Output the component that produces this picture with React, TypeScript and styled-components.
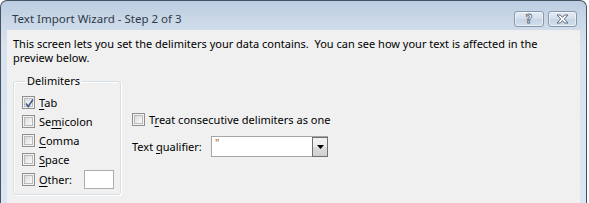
import React from 'react'
import styled, { createGlobalStyle } from 'styled-components'

const GlobalStyle = createGlobalStyle`
    html, body {
        margin: 0;
        padding: 0;
        background: #ffffff;
        overflow: hidden;
    }
    body {
        font-family: "Noto Sans", "DejaVu Sans", sans-serif;
        font-size: 11px;
        color: #000000;
    }
`

const UI_FONT = `"Noto Sans", "DejaVu Sans", sans-serif`

const Window = styled.div`
    width: 587px;
    height: 203px;
    overflow: hidden;
    box-sizing: border-box;
    border: 1px solid #47525f;
    border-bottom: none;
    border-radius: 7px 7px 0 0;
    background: linear-gradient(to bottom, #bccde1 0px, #ccd9e8 22px, #d8e3f0 45px, #dbe6f3 100%);
    padding: 0 6px;
    display: flex;
    flex-direction: column;
`

const TitleBar = styled.div`
    height: 29px;
    flex-shrink: 0;
    display: flex;
    align-items: flex-start;
`

const Title = styled.div`
    flex: 1;
    margin: 10px 0 0 5px;
    line-height: 16px;
    font-family: ${UI_FONT};
    font-size: 11.5px;
    color: #2e3a48;
`

const TitleButtons = styled.div`
    display: flex;
    gap: 4px;
    margin: 10px 3px 0 0;
`

const CaptionButton = styled.div<{ $w: number }>`
    width: ${p => p.$w}px;
    height: 16px;
    box-sizing: border-box;
    border: 1px solid #8696ab;
    border-radius: 3px;
    background: linear-gradient(to bottom, #e4ebf4 0%, #d3deeb 50%, #c6d4e5 51%, #d2deec 100%);
    box-shadow: inset 0 0 0 1px rgba(255, 255, 255, 0.55);
    display: flex;
    align-items: center;
    justify-content: center;
`

const HelpGlyph = styled.span`
    font-family: "DejaVu Sans", sans-serif;
    font-weight: bold;
    font-size: 12px;
    line-height: 12px;
    color: #ffffff;
    -webkit-text-stroke: 0.8px #5d6b7d;
`

const Content = styled.div`
    flex: 1;
    background: #f0f0f0;
    padding: 7px 6px 8px;
`

const Intro = styled.p`
    margin: 0;
    font-family: ${UI_FONT};
    font-size: 11px;
    line-height: 14px;
    white-space: nowrap;
`

const Body = styled.div`
    display: flex;
    gap: 11px;
    margin-top: 9px;
`

const GroupBox = styled.fieldset`
    margin: 0;
    width: 108px;
    height: 121px;
    box-sizing: border-box;
    border: 1px solid #d5dfe5;
    border-radius: 3px;
    padding: 5px 0 4px 8px;
    box-shadow: inset 1px 1px 0 #ffffff, 1px 1px 0 #ffffff;
`

const Legend = styled.legend`
    padding: 0 2px;
    margin-left: 3px;
    font-family: ${UI_FONT};
    font-size: 11px;
    line-height: 14px;
`

const OptionRow = styled.label<{ $h?: number }>`
    display: flex;
    align-items: center;
    gap: 4px;
    height: ${p => p.$h ?? 19}px;
    font-family: ${UI_FONT};
    font-size: 11px;
`

const Box = styled.span`
    position: relative;
    width: 13px;
    height: 13px;
    box-sizing: border-box;
    border: 1px solid #8e8f8f;
    background: #f4f4f4;
    flex-shrink: 0;
    &::after {
        content: '';
        position: absolute;
        inset: 1px;
        border: 1px solid #b9bbbd;
        background: linear-gradient(135deg, #d9d9d9 0%, #eeeeee 60%, #f8f8f8 100%);
    }
    svg {
        position: absolute;
        left: 0;
        top: 0;
        z-index: 1;
    }
`

const OtherLabel = styled.span`
    width: 41px;
`

const SmallInput = styled.div`
    width: 30px;
    height: 19px;
    box-sizing: border-box;
    border: 1px solid #abadb3;
    background: #ffffff;
`

const Side = styled.div`
    display: flex;
    flex-direction: column;
    padding-top: 36px;
`

const QualifierRow = styled.div`
    display: flex;
    align-items: center;
    height: 21px;
    margin-top: 7px;
    font-family: ${UI_FONT};
    font-size: 11px;
`

const QualifierLabel = styled.span`
    width: 79px;
`

const Combo = styled.div`
    position: relative;
    width: 117px;
    height: 21px;
    box-sizing: border-box;
    border: 1px solid #a5a5a5;
    background: #ffffff;
    display: flex;
    align-items: stretch;
`

const ComboValue = styled.span`
    flex: 1;
    padding-left: 3px;
    line-height: 12px;
    color: #b65a1e;
    font-family: ${UI_FONT};
    font-size: 11px;
`

const DropButton = styled.div`
    width: 16px;
    box-sizing: border-box;
    border: 1px solid #707070;
    margin: 0 -1px -1px 0;
    background: linear-gradient(to bottom, #f2f2f2 0%, #ebebeb 50%, #dddddd 51%, #cfcfcf 100%);
    display: flex;
    align-items: center;
    justify-content: center;
`

const Key = styled.u`
    text-decoration: underline;
    text-underline-offset: 2px;
`

const Check = ({ checked = false }: { checked?: boolean }) => (
    <Box>
        {checked && (
            <svg width="13" height="13" viewBox="0 0 13 13">
                <path d="M3 6.5 L5.2 9.5 L10 2.5" fill="none" stroke="#4a5a8e" strokeWidth="1.6" />
            </svg>
        )}
    </Box>
)

const App = () => {
    return (
        <>
            <GlobalStyle />
            <Window>
                <TitleBar>
                    <Title>Text Import Wizard - Step 2 of 3</Title>
                    <TitleButtons>
                        <CaptionButton $w={30}>
                            <HelpGlyph>?</HelpGlyph>
                        </CaptionButton>
                        <CaptionButton $w={29}>
                            <svg width="13" height="10" viewBox="0 0 13 10">
                                <path
                                    d="M1 1 H4.5 L6.5 3.4 L8.5 1 H12 L8.3 5 L12 9 H8.5 L6.5 6.6 L4.5 9 H1 L4.7 5 Z"
                                    fill="#ffffff"
                                    stroke="#5d6b7d"
                                    strokeWidth="1"
                                    strokeLinejoin="round"
                                />
                            </svg>
                        </CaptionButton>
                    </TitleButtons>
                </TitleBar>
                <Content>
                    <Intro>
                        This screen lets you set the delimiters your data contains.&nbsp; You can see how your text is affected in the
                        <br />
                        preview below.
                    </Intro>
                    <Body>
                        <GroupBox>
                            <Legend>Delimiters</Legend>
                            <OptionRow><Check checked /><span><Key>T</Key>ab</span></OptionRow>
                            <OptionRow><Check /><span>Se<Key>m</Key>icolon</span></OptionRow>
                            <OptionRow><Check /><span><Key>C</Key>omma</span></OptionRow>
                            <OptionRow><Check /><span><Key>S</Key>pace</span></OptionRow>
                            <OptionRow $h={21}>
                                <Check />
                                <OtherLabel><Key>O</Key>ther:</OtherLabel>
                                <SmallInput />
                            </OptionRow>
                        </GroupBox>
                        <Side>
                            <OptionRow><Check /><span>T<Key>r</Key>eat consecutive delimiters as one</span></OptionRow>
                            <QualifierRow>
                                <QualifierLabel>Text <Key>q</Key>ualifier:</QualifierLabel>
                                <Combo>
                                    <ComboValue>"</ComboValue>
                                    <DropButton>
                                        <svg width="7" height="4" viewBox="0 0 7 4">
                                            <path d="M0 0 H7 L3.5 4 Z" fill="#000000" />
                                        </svg>
                                    </DropButton>
                                </Combo>
                            </QualifierRow>
                        </Side>
                    </Body>
                </Content>
            </Window>
        </>
    )
}

export default App
